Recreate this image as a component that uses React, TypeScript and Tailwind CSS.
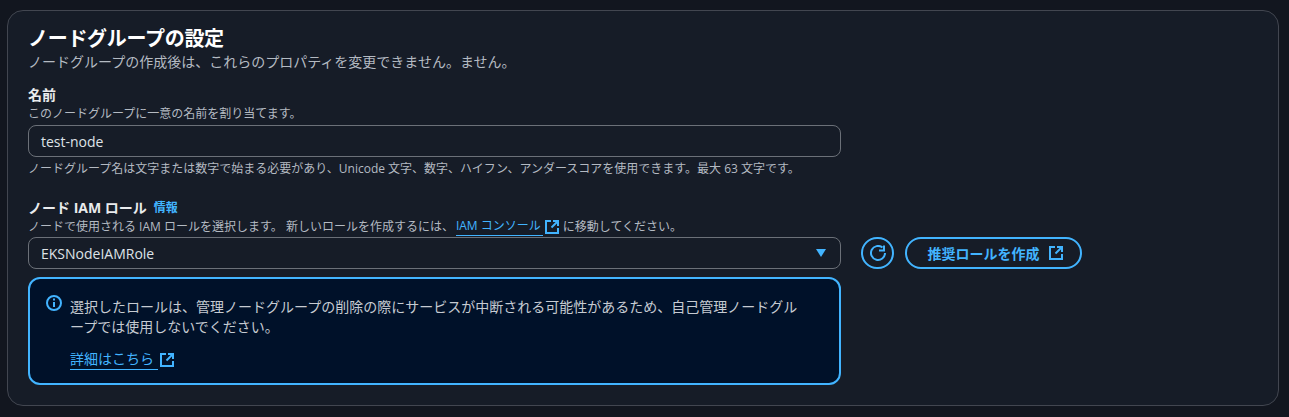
const jp = { fontFamily: '"Open Sans", "Noto Sans CJK JP", sans-serif' };

function ExternalIcon({ className }: { className: string }) {
  return (
    <svg viewBox="0 0 14 14" fill="none" stroke="currentColor" strokeWidth="2" className={className}>
      <path d="M13 8v5H1V1h5" />
      <path d="M8 1h5v5" />
      <path d="M13 1 6.5 7.5" />
    </svg>
  );
}

function RefreshIcon() {
  return (
    <svg viewBox="0 0 16 16" fill="none" stroke="currentColor" strokeWidth="2" className="w-4 h-4">
      <path d="M15 8A7 7 0 1 1 12.5 2.6" />
      <path d="M9 5.5h5v-5" />
    </svg>
  );
}

function InfoIcon() {
  return (
    <svg viewBox="0 0 16 16" fill="none" stroke="currentColor" strokeWidth="2" className="w-4 h-4">
      <circle cx="8" cy="8" r="7" />
      <path d="M8 7v5" />
      <path d="M8 3.5v2" />
    </svg>
  );
}

export default function App() {
  return (
    <div style={jp} className="w-[1289px] h-[417px] bg-[#12161f] pt-[10px] pl-[7px] overflow-hidden">
      <div className="w-[1272px] h-[396px] bg-[#161c27] border border-[#424650] rounded-[16px] pl-[20px] pt-[14px]">
        <h2 className="text-[20px] tracking-[-0.3px] leading-[28px] font-bold text-white">ノードグループの設定</h2>
        <p className="text-[14px] leading-[20px] text-[#b4bac2] -mt-[1px]">
          ノードグループの作成後は、これらのプロパティを変更できません。ません。
        </p>

        <div className="mt-[14px] text-[14px] leading-[18px] font-bold text-[#e9ebed]">名前</div>
        <div className="mt-[2px] text-[12px] leading-[16px] text-[#b4bac2]">このノードグループに一意の名前を割り当てます。</div>
        <div className="mt-[3px] w-[813px] h-[32px] border border-[#6b7078] rounded-[8px] px-[12px] flex items-center text-[14px] text-[#dfe3e8]">
          test-node
        </div>
        <div className="mt-[4px] text-[12px] leading-[16px] text-[#b4bac2]">
          ノードグループ名は文字または数字で始まる必要があり、Unicode 文字、数字、ハイフン、アンダースコアを使用できます。最大 63 文字です。
        </div>

        <div className="mt-[22px] flex items-center text-[14px] leading-[18px]">
          <span className="font-bold text-[#e9ebed]">ノード IAM ロール</span>
          <span className="ml-[7px] text-[12px] font-bold text-[#42b4ff]">情報</span>
        </div>
        <div className="text-[12px] leading-[18px] text-[#b4bac2] flex items-center">
          <span>ノードで使用される IAM ロールを選択します。 新しいロールを作成するには、</span>
          <span className="ml-[2px] text-[#42b4ff] border-b border-[#42b4ff] pr-[2px]">IAM コンソール</span>
          <ExternalIcon className="w-[14px] h-[14px] ml-[2px] mr-[4px] text-[#42b4ff]" />
          <span>に移動してください。</span>
        </div>

        <div className="mt-[1px] flex items-start">
          <div className="w-[813px]">
            <div className="h-[32px] border border-[#6b7078] rounded-[8px] pl-[12px] pr-[14px] flex items-center justify-between text-[14px] text-[#dfe3e8]">
              <span>EKSNodeIAMRole</span>
              <svg viewBox="0 0 10 8" className="w-[10px] h-[8px] text-[#42b4ff]" fill="currentColor">
                <path d="M0 0h10L5 8z" />
              </svg>
            </div>
            <div className="mt-[8px] h-[108px] border-2 border-[#42b4ff] rounded-[12px] bg-[#001129] pl-[16px] pt-[16px] flex">
              <div className="text-[#42b4ff]"><InfoIcon /></div>
              <div className="ml-[8px] w-[740px] text-[14px] leading-[20px] text-[#c6cbd2] mt-[2px]">
                <p>選択したロールは、管理ノードグループの削除の際にサービスが中断される可能性があるため、自己管理ノードグループでは使用しないでください。</p>
                <div className="mt-[12px] flex items-center">
                  <span className="text-[#42b4ff] border-b border-[#42b4ff] pr-[4px]">詳細はこちら</span>
                  <ExternalIcon className="w-[14px] h-[14px] ml-[2px] text-[#42b4ff]" />
                </div>
              </div>
            </div>
          </div>
          <div className="ml-[20px] w-[33px] h-[32px] rounded-full border-2 border-[#42b4ff] text-[#42b4ff] flex items-center justify-center">
            <RefreshIcon />
          </div>
          <div className="ml-[11px] w-[177px] h-[32px] rounded-full border-2 border-[#42b4ff] text-[#42b4ff] flex items-center justify-center pl-[3px] text-[14px] font-bold">
            推奨ロールを作成
            <ExternalIcon className="w-[14px] h-[14px] ml-[9px]" />
          </div>
        </div>
      </div>
    </div>
  );
}
